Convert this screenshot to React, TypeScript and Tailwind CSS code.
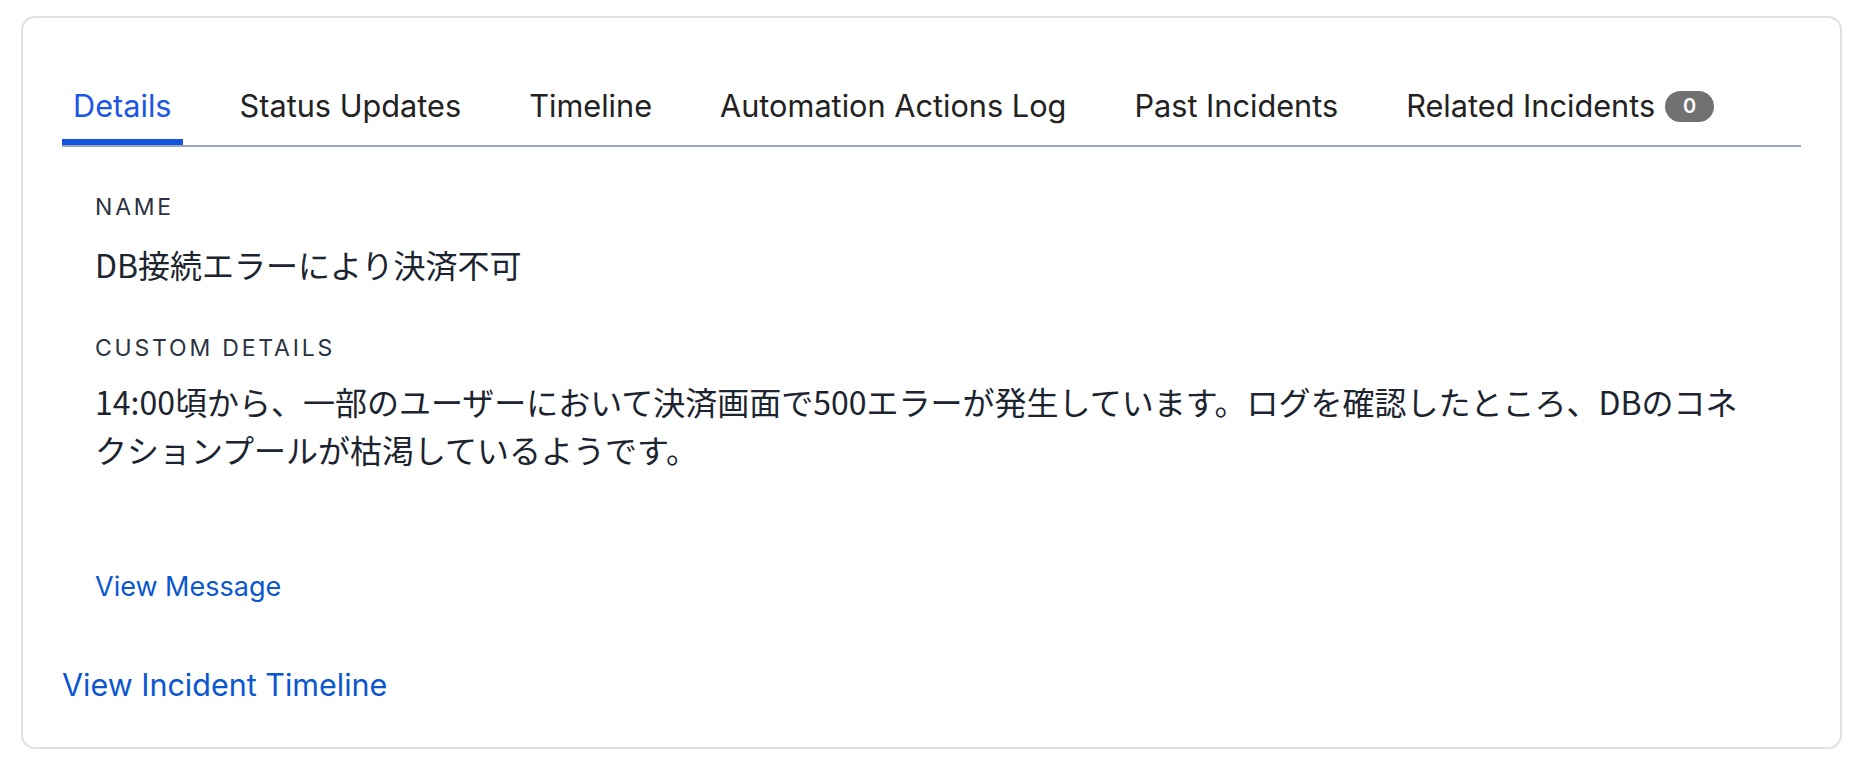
import React from 'react';

type Tab = { label: string; active?: boolean; count?: number };

const tabs: Tab[] = [
  { label: 'Details', active: true },
  { label: 'Status Updates' },
  { label: 'Timeline' },
  { label: 'Automation Actions Log' },
  { label: 'Past Incidents' },
  { label: 'Related Incidents', count: 0 },
];

const FieldLabel: React.FC<{ children: React.ReactNode; className?: string }> = ({ children, className = '' }) => (
  <div className={`font-['Inter',sans-serif] text-[23px] leading-[36px] tracking-[2.8px] text-[#2b3341] ${className}`}>
    {children}
  </div>
);

export default function App() {
  return (
    <div className="min-h-screen bg-white pt-[16px] pl-[21px] pr-[16px]">
      <div className="rounded-[14px] border-2 border-[#e0e0e0] bg-white px-[39px] pt-[64px] pb-[38px]">
        {/* Tabs */}
        <div className="flex gap-[46px] border-b-2 border-[#9ba7b9] font-['Inter',sans-serif] text-[30.7px] leading-[48px]">
          {tabs.map((tab) => (
            <div
              key={tab.label}
              className={`flex items-center px-[11px] pb-[9px] border-b-[6px] ${
                tab.active ? 'border-[#1553e2] text-[#1a56e6]' : 'border-transparent text-[#222]'
              }`}
            >
              <span>{tab.label}</span>
              {tab.count !== undefined && (
                <span className="ml-[10px] flex h-[31px] w-[49px] items-center justify-center rounded-full bg-[#717171] text-[20px] font-semibold leading-none text-white">
                  {tab.count}
                </span>
              )}
            </div>
          ))}
        </div>

        {/* Details panel */}
        <div className="px-[33px]">
          <FieldLabel className="mt-[42px]">NAME</FieldLabel>
          <div className="mt-[15px] font-['Noto_Sans_CJK_JP',sans-serif] text-[32px] leading-[48px] text-[#1c2430]">
            DB接続エラーにより決済不可
          </div>

          <FieldLabel className="mt-[42px]">CUSTOM DETAILS</FieldLabel>
          <p className="mt-[11px] pr-[12px] font-['Noto_Sans_CJK_JP',sans-serif] text-[32px] leading-[48px] text-[#1c2430]">
            14:00頃から、一部のユーザーにおいて決済画面で500エラーが発生しています。ログを確認したところ、DBのコネクションプールが枯渇しているようです。
          </p>

          <a className="mt-[93px] block w-fit font-['Inter',sans-serif] text-[27px] leading-[42px] text-[#0b57d0]">
            View Message
          </a>
        </div>

        <a className="mt-[53px] block w-fit font-['Inter',sans-serif] text-[30.5px] leading-[48px] text-[#0b57d0]">
          View Incident Timeline
        </a>
      </div>
    </div>
  );
}
